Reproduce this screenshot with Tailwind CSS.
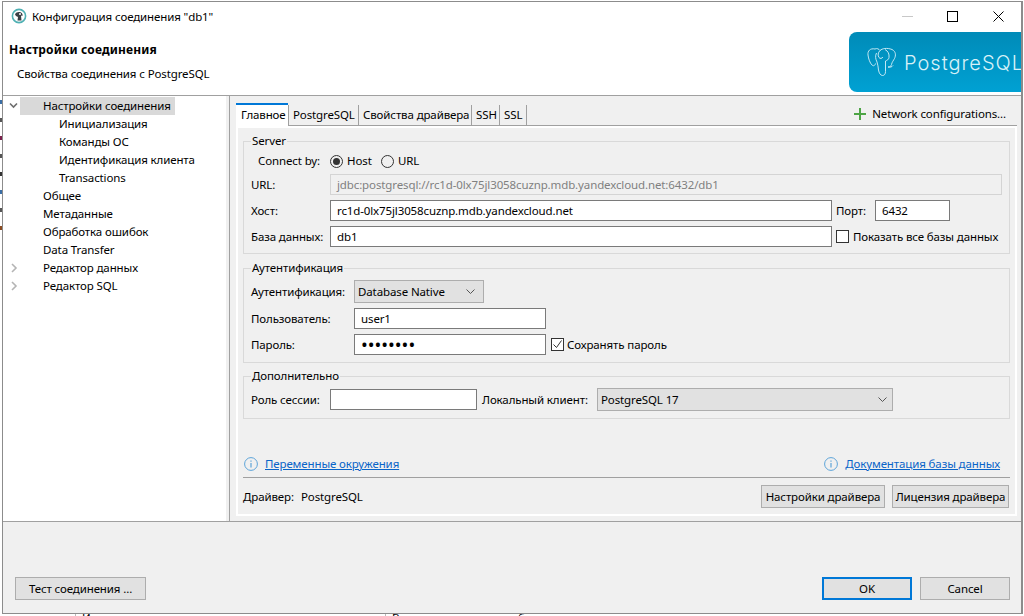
<!DOCTYPE html>
<html lang="ru">
<head>
    <meta charset="UTF-8">
    <title>Конфигурация соединения "db1"</title>
    <script src="https://cdn.jsdelivr.net/npm/@tailwindcss/browser@4"></script>
</head>
<body class="bg-white font-['Noto_Sans',sans-serif] text-[11.5px] tracking-[-0.12px] leading-[16px] text-black whitespace-nowrap">
<div class="relative w-[1024px] h-[616px] overflow-hidden">

    <!-- App behind the dialog -->
    <div class="absolute left-0 top-[100px] w-[2px] h-[480px] flex flex-col gap-[14px]">
        <div class="h-[4px] bg-[#3b6ea5]"></div>
        <div class="h-[4px] bg-[#555]"></div>
        <div class="h-[4px] bg-[#7a1f4a]"></div>
        <div class="h-[4px] bg-[#555]"></div>
        <div class="h-[4px] bg-[#333]"></div>
        <div class="h-[4px] bg-[#3b6ea5]"></div>
        <div class="h-[4px] bg-[#555]"></div>
        <div class="h-[4px] bg-[#8a4a20]"></div>
    </div>
    <div class="absolute left-[82px] top-[610px]">Источник данных</div>
    <div class="absolute left-[392px] top-[610px]">Введите часть имени объекта для поиска</div>
    <div class="absolute left-[75px] top-[614px] w-px h-[2px] bg-[#bbb]"></div>
    <div class="absolute left-[385px] top-[614px] w-px h-[2px] bg-[#bbb]"></div>

    <!-- Dialog window -->
    <div class="relative z-10 ml-[2px] mt-px w-[1021px] h-[613px] border border-[#8c8c8c] border-r-2 bg-[#f0f0f0] flex flex-col">

        <!-- Title bar -->
        <div class="h-[28px] bg-white flex items-center shrink-0">
            <svg class="ml-[8px] w-[16px] h-[16px]" viewBox="0 0 16 16">
                <circle cx="8" cy="8" r="6.6" fill="#fff" stroke="#4fb0b3" stroke-width="1.6"/>
                <path d="M4 6.5C5 4 8 3.5 10 4.5c1.500.8 2 2.500 1.300 3.500L10 7.500l.5 5H6.500L7 9 5 8z" fill="#3a4045"/>
                <circle cx="9" cy="6" r="1" fill="#fff"/>
            </svg>
            <span class="ml-[5px] pt-[2px]">Конфигурация соединения "db1"</span>
            <div class="ml-auto flex items-center">
                <div class="w-[11px] h-px bg-[#c8c8c8]"></div>
                <div class="ml-[34px] w-[11px] h-[11px] border border-black"></div>
                <svg class="ml-[35px] mr-[17px] w-[11px] h-[11px]" viewBox="0 0 11 11"><path d="M.5.500l10 10M10.500.500l-10 10" stroke="#000" fill="none"/></svg>
            </div>
        </div>

        <!-- Header with logo -->
        <div class="h-[66px] bg-white border-b border-[#a0a0a0] flex shrink-0">
            <div class="pl-[6px]">
                <div class="mt-[12px] font-bold text-[12px] tracking-[0.15px]">Настройки соединения</div>
                <div class="mt-[8px] ml-[8px]">Свойства соединения с PostgreSQL</div>
            </div>
            <div class="ml-auto mt-[2px] w-[172px] h-[60px] rounded-l-[8px] bg-gradient-to-b from-[#008bb8] to-[#00a1d3] flex items-center overflow-hidden">
                <svg class="ml-[18px] w-[30px] h-[30px] shrink-0" viewBox="0 0 30 30" fill="none" stroke="#d8f1f8" stroke-width="0.9">
                    <path d="M8 2C3 1 .5 4 1 8c.5 4 2 8 4 10 1.500 1.500 3 .5 3.500-1.500"/>
                    <path d="M8 2c2-1 4 0 5 1.500C15 1.500 20 .5 25 2.500c4 2 4 6 2.500 9-1 2-2.500 3.500-3 6-.4 2-2 2.500-3.500 2.500"/>
                    <path d="M9.500 6C8 9 8.500 12 10 15c1 2.500 1 5 1.500 8 .5 3 2 5.500 4 5.500s3-1.500 3-4V14"/>
                    <path d="M13 3.500c-2 2-2.500 5-1 7 1 1.500 3 1 4-.5"/>
                    <path d="M18 2.500c3 1.500 4.500 4.500 4 8-.3 2-2 3-3.500 3.500"/>
                    <path d="M21 20c2 .5 4 0 5-1.500"/>
                </svg>
                <span class="ml-[7px] mt-[2px] font-['Inter',sans-serif] font-light text-[20px] tracking-[1px] leading-[24px] text-[#d8f1f8]">PostgreSQL</span>
            </div>
        </div>

        <!-- Main area -->
        <div class="h-[425px] flex shrink-0">

            <!-- Tree -->
            <div class="w-[223px] bg-white pt-px shrink-0 leading-[18px]">
                <div class="flex items-center h-[18px]">
                    <svg class="w-[17px] h-[18px] shrink-0" viewBox="0 0 17 18" fill="none"><path d="M7 6.500l3.500 3.500 3.500-3.500" stroke="#6e6e6e" stroke-width="1.600"/></svg>
                    <div class="w-[155px] h-[18px] bg-[#d9d9d9] pl-[23px]">Настройки соединения</div>
                </div>
                <div class="h-[18px] pl-[56px]">Инициализация</div>
                <div class="h-[18px] pl-[56px]">Команды ОС</div>
                <div class="h-[18px] pl-[56px]">Идентификация клиента</div>
                <div class="h-[18px] pl-[56px]">Transactions</div>
                <div class="h-[18px] pl-[40px]">Общее</div>
                <div class="h-[18px] pl-[40px]">Метаданные</div>
                <div class="h-[18px] pl-[40px]">Обработка ошибок</div>
                <div class="h-[18px] pl-[40px]">Data Transfer</div>
                <div class="flex items-center h-[18px]">
                    <svg class="w-[40px] h-[18px] shrink-0" viewBox="0 0 40 18" fill="none"><path d="M9 5l4 4-4 4" stroke="#b4b4b4" stroke-width="1.600"/></svg>
                    <span>Редактор данных</span>
                </div>
                <div class="flex items-center h-[18px]">
                    <svg class="w-[40px] h-[18px] shrink-0" viewBox="0 0 40 18" fill="none"><path d="M9 5l4 4-4 4" stroke="#b4b4b4" stroke-width="1.600"/></svg>
                    <span>Редактор SQL</span>
                </div>
            </div>

            <!-- Sash -->
            <div class="w-[3px] shrink-0"></div>
            <div class="w-px bg-[#a0a0a0] shrink-0"></div>

            <!-- Tabs -->
            <div class="ml-[6px] w-[781px] shrink-0 pt-[7px]">
                <div class="h-[23px] flex">
                    <div class="w-[52px] bg-white border-t-2 border-[#0078d7] pl-[5px] pt-[2px]">Главное</div>
                    <div class="flex-1 flex border-b border-[#a0a0a0]">
                        <div class="border-l border-r border-[#a0a0a0] px-[4px] w-[71px] mt-[2px] pt-[2px]">PostgreSQL</div>
                        <div class="border-r border-[#a0a0a0] px-[4px] w-[113px] mt-[2px] pt-[2px]">Свойства драйвера</div>
                        <div class="border-r border-[#a0a0a0] px-[4px] w-[28px] mt-[2px] pt-[2px]">SSH</div>
                        <div class="border-r border-[#a0a0a0] px-[4px] w-[27px] mt-[2px] pt-[2px]">SSL</div>
                        <div class="ml-auto mr-[11px] flex items-center h-[20px] mt-[1px]">
                            <svg class="w-[12px] h-[12px] mr-[6px]" viewBox="0 0 12 12"><path d="M6 0v12M0 6h12" stroke="#4da445" stroke-width="2"/></svg>
                            <span>Network configurations...</span>
                        </div>
                    </div>
                </div>

                <div class="h-[390px] border-2 border-white bg-[#f0f0f0] px-[5px] pt-[5px]">

                    <!-- Server -->
                    <fieldset class="h-[121px] border border-[#d9d9d9] px-[7px]">
                        <legend class="px-px">Server</legend>
                        <div class="flex items-center h-[18px] mt-[3px] pl-[7px]">
                            <span class="w-[72px]">Connect by:</span>
                            <span class="w-[13px] h-[13px] rounded-full border border-[#333] flex items-center justify-center"><span class="w-[7px] h-[7px] rounded-full bg-[#333]"></span></span>
                            <span class="ml-[4px] w-[34px]">Host</span>
                            <span class="w-[13px] h-[13px] rounded-full border border-[#333]"></span>
                            <span class="ml-[4px]">URL</span>
                        </div>
                        <div class="flex items-center mt-[4px]">
                            <span class="w-[79px]">URL:</span>
                            <div class="w-[672px] h-[21px] border border-[#d4d4d4] bg-[#f0f0f0] px-[6px] leading-[20px] text-[#808080]">jdbc:postgresql://rc1d-0lx75jl3058cuznp.mdb.yandexcloud.net:6432/db1</div>
                        </div>
                        <div class="flex items-center mt-[5px]">
                            <span class="w-[79px]">Хост:</span>
                            <div class="w-[502px] h-[21px] border border-[#7a7a7a] bg-white px-[6px] leading-[20px]">rc1d-0lx75jl3058cuznp.mdb.yandexcloud.net</div>
                            <span class="ml-[4px] w-[39px]">Порт:</span>
                            <div class="w-[75px] h-[21px] border border-[#7a7a7a] bg-white px-[6px] leading-[20px]">6432</div>
                        </div>
                        <div class="flex items-center mt-[5px]">
                            <span class="w-[79px]">База данных:</span>
                            <div class="w-[502px] h-[21px] border border-[#7a7a7a] bg-white px-[6px] leading-[20px]">db1</div>
                            <span class="ml-[4px] w-[13px] h-[13px] border border-[#333] bg-white shrink-0"></span>
                            <span class="ml-[4px]">Показать все базы данных</span>
                        </div>
                    </fieldset>

                    <!-- Authentication -->
                    <fieldset class="mt-[6px] h-[103px] border border-[#d9d9d9] px-[7px]">
                        <legend class="px-px">Аутентификация</legend>
                        <div class="flex items-center mt-[4px]">
                            <span class="w-[103px]">Аутентификация:</span>
                            <div class="w-[130px] h-[23px] border border-[#adadad] bg-[#e1e1e1] pl-[3px] pr-[8px] flex items-center justify-between">
                                <span class="pt-px">Database Native</span>
                                <svg class="w-[9px] h-[5px]" viewBox="0 0 9 5" fill="none"><path d="M.5.500l4 4 4-4" stroke="#555"/></svg>
                            </div>
                        </div>
                        <div class="flex items-center mt-[5px]">
                            <span class="w-[103px]">Пользователь:</span>
                            <div class="w-[192px] h-[21px] border border-[#7a7a7a] bg-white px-[6px] leading-[20px]">user1</div>
                        </div>
                        <div class="flex items-center mt-[5px]">
                            <span class="w-[103px]">Пароль:</span>
                            <div class="w-[192px] h-[21px] border border-[#7a7a7a] bg-white px-[6px] leading-[18px] text-[18px] tracking-[0]">••••••••</div>
                            <span class="ml-[5px] w-[13px] h-[13px] border border-[#333] bg-white flex items-center justify-center">
                                <svg class="w-[11px] h-[11px]" viewBox="0 0 11 11" fill="none"><path d="M1.500 5.500l3 3 5-7" stroke="#333"/></svg>
                            </span>
                            <span class="ml-[3px]">Сохранять пароль</span>
                        </div>
                    </fieldset>

                    <!-- Advanced -->
                    <fieldset class="mt-[5px] h-[51px] border border-[#d9d9d9] px-[7px]">
                        <legend class="px-px">Дополнительно</legend>
                        <div class="flex items-center h-[23px] mt-[4px]">
                            <span class="w-[79px]">Роль сессии:</span>
                            <div class="w-[147px] h-[21px] border border-[#7a7a7a] bg-white"></div>
                            <span class="ml-[5px] w-[115px]">Локальный клиент:</span>
                            <div class="w-[296px] h-[23px] border border-[#adadad] bg-[#e1e1e1] pl-[3px] pr-[3px] flex items-center justify-between">
                                <span class="pt-px">PostgreSQL 17</span>
                                <svg class="mr-[2px] w-[9px] h-[5px]" viewBox="0 0 9 5" fill="none"><path d="M.5.500l4 4 4-4" stroke="#555"/></svg>
                            </div>
                        </div>
                    </fieldset>

                    <!-- Links -->
                    <div class="mt-[37px] h-[16px] pl-px pr-[10px] flex items-center justify-between">
                        <div class="flex items-center">
                            <svg class="w-[14px] h-[14px] mr-[7px]" viewBox="0 0 14 14" fill="none"><circle cx="7" cy="7" r="6.400" stroke="#5da4d9"/><path d="M7 6v4.500M7 3.500v1.300" stroke="#5da4d9" stroke-width="1.200"/></svg>
                            <a href="#" class="text-[#0a64c8] underline">Переменные окружения</a>
                        </div>
                        <div class="flex items-center">
                            <svg class="w-[14px] h-[14px] mr-[7px]" viewBox="0 0 14 14" fill="none"><circle cx="7" cy="7" r="6.400" stroke="#5da4d9"/><path d="M7 6v4.500M7 3.500v1.300" stroke="#5da4d9" stroke-width="1.200"/></svg>
                            <a href="#" class="text-[#0a64c8] underline">Документация базы данных</a>
                        </div>
                    </div>

                    <!-- Driver -->
                    <div class="mt-[5px] border-t border-[#a0a0a0] pt-[7px] pr-px flex items-center">
                        <span class="w-[58px]">Драйвер:</span>
                        <span>PostgreSQL</span>
                        <button class="ml-auto w-[124px] h-[23px] border border-[#adadad] bg-[#e1e1e1]">Настройки драйвера</button>
                        <button class="ml-[7px] w-[117px] h-[23px] border border-[#adadad] bg-[#e1e1e1]">Лицензия драйвера</button>
                    </div>
                </div>
            </div>
        </div>

        <!-- Footer -->
        <div class="flex-1 border-t border-[#a0a0a0] flex items-end pl-[12px] pr-[11px] pb-[13px]">
            <button class="w-[131px] h-[23px] border border-[#adadad] bg-[#e1e1e1]">Тест соединения ...</button>
            <button class="ml-auto w-[90px] h-[23px] border-2 border-[#0078d7] bg-[#e1e1e1]">OK</button>
            <button class="ml-[8px] w-[90px] h-[23px] border border-[#adadad] bg-[#e1e1e1]">Cancel</button>
        </div>
    </div>
</div>
</body>
</html>
